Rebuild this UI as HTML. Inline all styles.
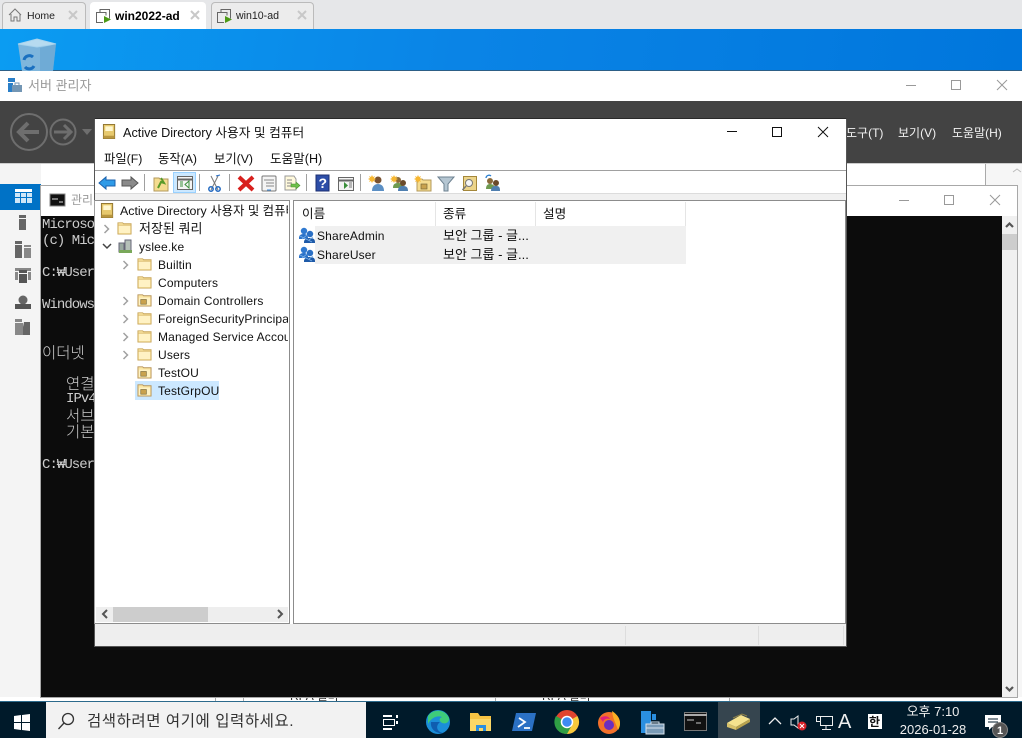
<!DOCTYPE html>
<html><head><meta charset="utf-8"><style>
html,body{margin:0;padding:0}
body{width:1022px;height:738px;position:relative;overflow:hidden;background:#fff;font:12px "Liberation Sans","Noto Sans CJK KR",sans-serif;color:#222}
.b{position:absolute;box-sizing:border-box}
.t{position:absolute;white-space:nowrap;line-height:16px;height:16px}
.l{letter-spacing:.16px}
.c{font:14px/16px "Liberation Mono","Noto Sans CJK KR",monospace;letter-spacing:-.96px;color:#ccc;position:absolute;white-space:pre}
.k{font:15.5px/16px "Noto Sans CJK KR",sans-serif;font-weight:300;color:#ccc;position:absolute;white-space:pre}
svg{position:absolute;left:0;top:0}
</style></head><body>
<!-- VM tabs -->
<div class="b" style="left:0;top:0;width:1022px;height:29px;background:#e6e7e9"></div>
<div class="b" style="left:2px;top:2px;width:84px;height:27px;background:#ececec;border:1px solid #bbb;border-bottom:0;border-radius:4px 4px 0 0"></div>
<div class="b" style="left:90px;top:2px;width:116px;height:27px;background:#fff;border-radius:4px 4px 0 0"></div>
<div class="b" style="left:211px;top:2px;width:103px;height:27px;background:#ececec;border:1px solid #bbb;border-bottom:0;border-radius:4px 4px 0 0"></div>
<div class="t" style="left:27px;top:8px;font-size:10.5px">Home</div>
<div class="t" style="left:115px;top:8px;font-size:12px;font-weight:bold;color:#000">win2022-ad</div>
<div class="t" style="left:236px;top:8px;font-size:10.6px">win10-ad</div>
<!-- desktop -->
<div class="b" style="left:0;top:29px;width:1022px;height:42px;background:linear-gradient(100deg,#0b9cf2,#0a84e6 45%,#0076dc)"></div>
<!-- server manager -->
<div class="b" style="left:0;top:70px;width:1022px;height:31px;background:#fff;border-top:1px solid #2d5f86"></div>
<div class="t" style="left:28px;top:78px;color:#999;font-size:13px">서버 관리자</div>
<div class="b" style="left:0;top:101px;width:1022px;height:62px;background:#434343"></div>
<div class="t" style="left:846px;top:125px;color:#f2f2f2">도구(T)</div>
<div class="t" style="left:898px;top:125px;color:#f2f2f2">보기(V)</div>
<div class="t" style="left:952px;top:125px;color:#f2f2f2">도움말(H)</div>
<div class="b" style="left:0;top:163px;width:1022px;height:534px;background:#fff;border-top:1px solid #ccc"></div>
<div class="b" style="left:0;top:164px;width:41px;height:533px;background:#f4f4f4"></div>
<div class="b" style="left:0;top:184px;width:41px;height:26px;background:#0072c6"></div>
<div class="b" style="left:985px;top:164px;width:1px;height:22px;background:#aaa"></div>
<div class="b" style="left:986px;top:164px;width:36px;height:534px;background:#f6f6f6"></div>
<!-- peeking table -->
<div class="b" style="left:0;top:697px;width:1022px;height:5px;background:#fff;overflow:hidden">
 <div class="b" style="left:215px;top:0;width:1px;height:5px;background:#aaa"></div>
 <div class="b" style="left:243px;top:0;width:1px;height:5px;background:#aaa"></div>
 <div class="b" style="left:495px;top:0;width:1px;height:5px;background:#aaa"></div>
 <div class="b" style="left:729px;top:0;width:1px;height:5px;background:#aaa"></div>
 <div class="t" style="left:290px;top:-9px;color:#333">RPA 설비</div>
 <div class="t" style="left:542px;top:-9px;color:#333">RPA 설비</div>
</div>
<!-- cmd -->
<div class="b" style="left:40px;top:185px;width:978px;height:513px;background:#fff;border:1px solid #a8a8a8"></div>
<div class="b" style="left:41px;top:216px;width:961px;height:481px;background:#0c0c0c;overflow:hidden">
<div class="c" style="left:1px;top:1px">Microsoft
(c) Microsoft

C:₩Users

Windows IP</div>
<div class="k" style="left:1px;top:128px">이더넷</div>
<div class="k" style="left:25px;top:159px">연결</div>
<div class="c" style="left:25px;top:175px">IPv4</div>
<div class="k" style="left:25px;top:191px">서브</div>
<div class="k" style="left:25px;top:207px">기본</div>
<div class="c" style="left:1px;top:241px">C:₩Users</div>
</div>
<div class="b" style="left:1002px;top:216px;width:15px;height:481px;background:#f0f0f0"></div>
<div class="b" style="left:1002px;top:234px;width:15px;height:16px;background:#cdcdcd"></div>
<div class="t" style="left:71px;top:192px;color:#999">관리</div>
<!-- ADUC -->
<div class="b" style="left:94px;top:118px;width:753px;height:529px;background:#fff;border:1px solid #555;border-top-color:#2a2a2a"></div>
<div class="t" style="left:123px;top:125px;color:#111;font-size:12.7px">Active Directory 사용자 및 컴퓨터</div>
<div class="t" style="left:104px;top:151px;color:#111;font-size:12.3px">파일(F)</div>
<div class="t" style="left:158px;top:151px;color:#111;font-size:12.3px">동작(A)</div>
<div class="t" style="left:214px;top:151px;color:#111;font-size:12.3px">보기(V)</div>
<div class="t" style="left:270px;top:151px;color:#111;font-size:12.6px">도움말(H)</div>
<div class="b" style="left:95px;top:170px;width:751px;height:1px;background:#a0a0a0"></div>
<div class="b" style="left:95px;top:193px;width:751px;height:7px;background:#f0f0f0;border-top:1px solid #dcdcdc"></div>
<div class="b" style="left:173px;top:172px;width:23px;height:21px;background:#cce8ff;border:1px solid #99d1ff"></div>
<div class="b" style="left:144px;top:174px;width:1px;height:17px;background:#a0a0a0"></div>
<div class="b" style="left:199px;top:174px;width:1px;height:17px;background:#a0a0a0"></div>
<div class="b" style="left:229px;top:174px;width:1px;height:17px;background:#a0a0a0"></div>
<div class="b" style="left:306px;top:174px;width:1px;height:17px;background:#a0a0a0"></div>
<div class="b" style="left:360px;top:174px;width:1px;height:17px;background:#a0a0a0"></div>
<!-- left pane -->
<div class="b" style="left:94px;top:200px;width:196px;height:424px;background:#fff;border:1px solid #8c8c8c;border-left-color:#a0a0a0;overflow:hidden">
 <div class="b" style="left:40px;top:180px;width:84px;height:19px;background:#cce8ff"></div>
 <div class="t" style="left:25px;top:2px;color:#111;font-size:12.4px">Active Directory 사용자 및 컴퓨터</div>
 <div class="t" style="left:44px;top:20px;color:#111;font-size:13px">저장된 쿼리</div>
 <div class="t l" style="left:44px;top:38px;color:#111">yslee.ke</div>
 <div class="t l" style="left:63px;top:56px;color:#111">Builtin</div>
 <div class="t l" style="left:63px;top:74px;color:#111">Computers</div>
 <div class="t l" style="left:63px;top:92px;color:#111">Domain Controllers</div>
 <div class="t l" style="left:63px;top:110px;color:#111">ForeignSecurityPrincipals</div>
 <div class="t l" style="left:63px;top:128px;color:#111">Managed Service Accounts</div>
 <div class="t l" style="left:63px;top:146px;color:#111">Users</div>
 <div class="t l" style="left:63px;top:164px;color:#111">TestOU</div>
 <div class="t l" style="left:63px;top:182px;color:#111">TestGrpOU</div>
 <div class="b" style="left:193px;top:0;width:1px;height:422px;background:#fff"></div>
 <div class="b" style="left:0;top:405px;width:194px;height:17px;background:#fff"></div>
 <div class="b" style="left:1px;top:406px;width:192px;height:15px;background:#eee"></div>
 <div class="b" style="left:18px;top:406px;width:95px;height:15px;background:#cdcdcd"></div>
</div>
<!-- right pane -->
<div class="b" style="left:293px;top:200px;width:553px;height:424px;background:#fff;border:1px solid #8c8c8c"></div>
<div class="b" style="left:435px;top:202px;width:1px;height:24px;background:#e5e5e5"></div>
<div class="b" style="left:535px;top:202px;width:1px;height:24px;background:#e5e5e5"></div>
<div class="b" style="left:685px;top:202px;width:1px;height:24px;background:#e5e5e5"></div>
<div class="b" style="left:315px;top:226px;width:371px;height:38px;background:#f0f0f0"></div>
<div class="t" style="left:302px;top:206px;color:#111;font-size:12.6px">이름</div>
<div class="t" style="left:443px;top:206px;color:#111;font-size:12.6px">종류</div>
<div class="t" style="left:543px;top:206px;color:#111;font-size:12.6px">설명</div>
<div class="t l" style="left:317px;top:228px;color:#111">ShareAdmin</div>
<div class="t l" style="left:317px;top:247px;color:#111">ShareUser</div>
<div class="t" style="left:443px;top:228px;color:#111;font-size:13px">보안 그룹 - 글...</div>
<div class="t" style="left:443px;top:247px;color:#111;font-size:13px">보안 그룹 - 글...</div>
<!-- status -->
<div class="b" style="left:95px;top:624px;width:751px;height:22px;background:#eee"></div>
<div class="b" style="left:625px;top:626px;width:1px;height:19px;background:#ddd"></div>
<div class="b" style="left:758px;top:626px;width:1px;height:19px;background:#ddd"></div>
<div class="b" style="left:843px;top:626px;width:1px;height:19px;background:#ddd"></div>
<!-- taskbar -->
<div class="b" style="left:0;top:701px;width:1022px;height:37px;background:#001a2a;border-top:1px solid #2c6a8c"></div>
<div class="b" style="left:46px;top:702px;width:320px;height:36px;background:#f2f2f2"></div>
<div class="t" style="left:87px;top:714px;font-size:15.5px;letter-spacing:.55px;color:#333">검색하려면 여기에 입력하세요.</div>
<div class="b" style="left:718px;top:702px;width:42px;height:36px;background:#36454f"></div>
<div class="t" style="left:903px;top:704px;color:#eee;width:60px;text-align:center;font-size:13px">오후 7:10</div>
<div class="t" style="left:893px;top:722px;color:#eee;width:80px;text-align:center;font-size:13px">2026-01-28</div>
<div class="t" style="left:838px;top:712px;color:#eee;font-size:20px;line-height:20px;height:20px">A</div>

<svg width="1022" height="738" viewBox="0 0 1022 738" fill="none">
<defs>
 <symbol id="fold" viewBox="0 0 16 16" overflow="visible"><path d="M1 3h5l1 1h8v11H1z" fill="#fbe6a2" stroke="#c9a65a"/><path d="M2 6h12v8H2z" fill="#fff2c4"/><path d="M1.500 5.500h13" stroke="#d9b96f"/></symbol>
 <symbol id="ou" viewBox="0 0 16 16" overflow="visible"><path d="M1 3h5l1 1h8v11H1z" fill="#fbe6a2" stroke="#b8955a"/><path d="M2 6h12v8H2z" fill="#fff2c4"/><rect x="4" y="8" width="6" height="5" fill="#c9a24e" stroke="#7a6a3a" stroke-width=".7"/></symbol>
 <symbol id="grp" viewBox="0 0 16 16" overflow="visible"><circle cx="5" cy="4" r="3.200" fill="#2f79d0"/><circle cx="11" cy="7" r="3.200" fill="#2a6fc4"/><path d="M0 11c0-3 2-4 5-4s4 2 4 4v1H0z" fill="#2b72c8"/><path d="M5 15c0-3 3-4 6-4s5 1 5 4v1H5z" fill="#1e5aa8"/><path d="M1 9l12 6M3 12l5-4M10 13l4-3" stroke="#7bb2ea" stroke-width=".8"/></symbol>
 <symbol id="book" viewBox="0 0 16 16" overflow="visible"><rect x="1.500" y=".5" width="12" height="15" fill="#e7c96d" stroke="#8f7430"/><rect x="3.500" y="2.500" width="8" height="5" fill="#fff7cf"/><rect x="1.500" y="12.500" width="12" height="3" fill="#b8963f"/></symbol>
 <symbol id="chev" viewBox="0 0 8 10" overflow="visible"><path d="M1.500 1l4 4-4 4" stroke="#a0a0a0" stroke-width="1.500"/></symbol>
</defs>
<!-- tab icons -->
<path d="M9 15l6-6 6 6M11 14v7h3v-4h3v4h3v-7" stroke="#777" stroke-width="1"/>
<path d="M69 11l8 8M77 11l-8 8M191 11l8 8M199 11l-8 8M298 11l8 8M306 11l-8 8" stroke="#c8c8c8" stroke-width="2"/>
<g stroke="#666"><path d="M100 12V9.500h9.500v9"/><path d="M103 22.500h-6.500v-10h9.500v3"/></g><path d="M104 16l7 3.500-7 3.500z" fill="#4c9a16"/>
<g stroke="#666"><path d="M221 12V9.500h9.500v9"/><path d="M224 22.500h-6.500v-10h9.500v3"/></g><path d="M225 16l7 3.500-7 3.500z" fill="#4c9a16"/>
<!-- recycle bin -->
<path d="M18 44l19-5 19 5-3 27H22z" fill="#7fb6dc"/><path d="M18 44l19-5 19 5-19 3z" fill="#b7dbf0" stroke="#a8d4ee"/><path d="M40 48v23h13l3-27z" fill="#5f9fcf" fill-opacity=".5"/>
<path d="M24 60a5.500 5.500 0 0 1 9-3M34 66a5.500 5.500 0 0 1-9 1" stroke="#1a70c0" stroke-width="3"/>
<!-- server manager -->
<path d="M8 78h7v4H8z" fill="#2a7fc8"/><path d="M8 83h5v9H8z" fill="#2a7fc8"/><rect x="12" y="85" width="10" height="7" fill="#7396b4"/><path d="M15 85v-2h4v2" stroke="#7396b4"/>
<path d="M906 85.500h10" stroke="#999"/><rect x="951.500" y="80.500" width="9" height="9" stroke="#999"/><path d="M997 80l10 10M1007 80l-10 10" stroke="#999"/>
<circle cx="29" cy="132" r="18" stroke="#6e6e6e" stroke-width="2"/><circle cx="63" cy="132" r="12.500" stroke="#6e6e6e" stroke-width="2"/>
<path d="M39 132H20M28 123l-9 9 9 9" stroke="#6e6e6e" stroke-width="4"/><path d="M54 132h16M64 125l7 7-7 7" stroke="#6e6e6e" stroke-width="3"/>
<path d="M82 129h10l-5 6z" fill="#6e6e6e"/>
<!-- nav icons -->
<path d="M15 189h17v3H15z" fill="#fff"/><path d="M15 193h5v4h-5zM21 193h5v4h-5zM27 193h5v4h-5zM15 198h5v5h-5zM21 198h5v5h-5zM27 198h5v5h-5z" fill="#cfe6f7"/>
<path d="M19 215h7v3h-7zM19 219h7v11h-7z" fill="#666"/>
<path d="M15 241h7v3h-7zM15 245h7v13h-7z" fill="#666"/><path d="M24 245h7v2h-7zM24 248h7v10h-7z" fill="#888"/>
<path d="M15 268h16v3H15zM15 272h3v8h-3zM28 272h3v8h-3z" fill="#888"/><path d="M19 270h8v3h-8zM19 274h8v9h-8z" fill="#555"/>
<circle cx="23" cy="300" r="4.500" fill="#666"/><path d="M15 304h16v5H15z" fill="#555"/>
<path d="M15 319h7v3h-7zM15 323h8v12h-8z" fill="#888"/><path d="M24 322h6v13h-7v-8z" fill="#666"/>
<!-- cmd icons -->
<rect x="50" y="194" width="15" height="12" fill="#111" stroke="#888"/><path d="M52 199h6M59 202h4" stroke="#ddd"/>
<path d="M899 200.500h10" stroke="#999"/><rect x="944.500" y="195.500" width="9" height="9" stroke="#999"/><path d="M990 195l10 10M1000 195l-10 10" stroke="#999"/>
<path d="M1006 227l3.500-3.500 3.500 3.500" stroke="#555" stroke-width="2.200"/>
<path d="M1006 687l3.500 3.500 3.500-3.500" stroke="#555" stroke-width="2.200"/>
<path d="M1013 172l4-3 4 3" stroke="#bbb"/>
<!-- ADUC title -->
<use href="#book" x="102" y="124" width="15" height="15"/>
<path d="M727 131.500h10" stroke="#111"/><rect x="772.500" y="127.500" width="9" height="9" stroke="#111"/><path d="M818 127l10 10M828 127l-10 10" stroke="#111"/>
<!-- toolbar -->
<path d="M99 183l7-6v3h9v6h-9v3z" fill="#2f9be8" stroke="#1b62ad"/>
<path d="M138 183l-7-6v3h-9v6h9v3z" fill="#8a8a8a" stroke="#555"/>
<path d="M154 178h5l1 1h8v12h-14z" fill="#f5dc90" stroke="#b39a5c"/><path d="M158 188l3-6 3 1-3-5" stroke="#5a9a2a" stroke-width="2"/>
<rect x="177.500" y="176.500" width="15" height="13" fill="#f4f4f4" stroke="#666"/><path d="M178 179.500h14" stroke="#666" stroke-width="2"/><path d="M180 182h3M180 184h3M180 186h3M189 181v7l-4-3.500z" stroke="#3a8f3a"/>
<path d="M211 190l7-14M218 190l-7-14" stroke="#777"/><circle cx="211" cy="189" r="2.200" stroke="#2269c0" stroke-width="1.500"/><circle cx="218" cy="189" r="2.200" stroke="#2269c0" stroke-width="1.500"/><path d="M216 176l4-1" stroke="#2269c0"/>
<path d="M239 177l14 13M253 177l-14 13" stroke="#d8211e" stroke-width="4"/>
<rect x="262" y="176" width="14" height="15" rx="1" fill="#f4f4f4" stroke="#777"/><path d="M264 180h10M266 183h8M266 186h8" stroke="#888"/><path d="M267 190h4" stroke="#3b8de0"/>
<path d="M285 176h9l2 3v11h-11z" fill="#fff9dc" stroke="#999"/><path d="M287 180h5M287 183h5M287 186h4" stroke="#888"/><path d="M291 184h5v-2l4 3.500-4 3.500v-2h-5z" fill="#6ec04a" stroke="#4b8f2e" stroke-width=".6"/>
<rect x="316" y="175" width="13" height="16" fill="#2d4ea8" stroke="#1c2f70"/><text x="318.500" y="188" font-family="Liberation Sans" font-weight="bold" font-size="14" fill="#fff">?</text>
<rect x="338.500" y="177.500" width="15" height="13" fill="#f4f4f4" stroke="#666"/><path d="M339 180.500h14" stroke="#666" stroke-width="2"/><path d="M344 182v7l4-3.500z" fill="#3a8f3a"/><path d="M349 183h3M349 185h3M349 187h3" stroke="#777"/>
<circle cx="378" cy="180" r="3.500" fill="#7a5230"/><path d="M372 191c0-5 3-7 6-7s6 2 6 7z" fill="#5b8fc4"/><path d="M372 175l1 2 2-1-1 2 2 1-2 1 1 2-2-1-1 2-1-2-2 1 1-2-2-1 2-1-1-2 2 1z" fill="#f7b731"/>
<circle cx="398" cy="180" r="3" fill="#8a6a3a"/><path d="M393 188c0-4 2-5 5-5s5 1 5 5z" fill="#6f9a50"/><circle cx="403" cy="183" r="3" fill="#6a4a2a"/><path d="M398 191c0-4 2-5 5-5s5 1 5 5z" fill="#4f7fb0"/><path d="M394 175l1 2 2-1-1 2 2 1-2 1 1 2-2-1-1 2-1-2-2 1 1-2-2-1 2-1-1-2 2 1z" fill="#f7b731"/>
<path d="M417 179h5l1 1h8v11h-14z" fill="#f5dc90" stroke="#b39a5c"/><rect x="421" y="184" width="6" height="5" fill="#c9a24e" stroke="#7a6a3a" stroke-width=".7"/><path d="M418 175l1 2 2-1-1 2 2 1-2 1 1 2-2-1-1 2-1-2-2 1 1-2-2-1 2-1-1-2 2 1z" fill="#f7b731"/>
<path d="M438 177h16l-6 7v7h-4v-7z" fill="#b5c6d2" stroke="#6d8190"/>
<rect x="463.500" y="176.500" width="13" height="14" fill="#ecd48a" stroke="#a4873a"/><circle cx="469" cy="183" r="3.500" fill="#f6f6f6" stroke="#777"/><path d="M466 186l-3.500 4" stroke="#777" stroke-width="1.500"/>
<circle cx="490" cy="181" r="3" fill="#8a6a3a"/><path d="M486 189c0-4 2-5 4-5s5 1 5 5z" fill="#6f9a50"/><circle cx="496" cy="183" r="3" fill="#6a4a2a"/><path d="M491 191c0-4 2-5 5-5s4 1 4 5z" fill="#4f7fb0"/><path d="M486 178a3 3 0 0 1 5-2" stroke="#2a7fd0" stroke-width="1.300"/>
<!-- tree -->
<use href="#book" x="100" y="203" width="15" height="15"/>
<use href="#chev" x="103" y="224" width="8" height="10"/>
<use href="#fold" x="117" y="220" width="15" height="15"/>
<path d="M103 244l4 4 4-4" stroke="#444" stroke-width="1.500"/>
<rect x="119" y="243" width="5" height="9" fill="#9aa8a0" stroke="#667"/><rect x="125" y="240" width="6" height="12" fill="#b5c0b8" stroke="#667"/><path d="M119 250h13v3h-13z" fill="#79a85a"/>
<use href="#chev" x="122" y="260" width="8" height="10"/>
<use href="#fold" x="137" y="256" width="15" height="15"/>
<use href="#fold" x="137" y="274" width="15" height="15"/>
<use href="#chev" x="122" y="296" width="8" height="10"/>
<use href="#ou" x="137" y="292" width="15" height="15"/>
<use href="#chev" x="122" y="314" width="8" height="10"/>
<use href="#fold" x="137" y="310" width="15" height="15"/>
<use href="#chev" x="122" y="332" width="8" height="10"/>
<use href="#fold" x="137" y="328" width="15" height="15"/>
<use href="#chev" x="122" y="350" width="8" height="10"/>
<use href="#fold" x="137" y="346" width="15" height="15"/>
<use href="#ou" x="137" y="364" width="15" height="15"/>
<use href="#ou" x="137" y="382" width="15" height="15"/>
<path d="M107 610l-4 4 4 4M278 610l4 4-4 4" stroke="#555" stroke-width="2"/>
<use href="#grp" x="299" y="227" width="16" height="16"/>
<use href="#grp" x="299" y="246" width="16" height="16"/>
<!-- taskbar icons -->
<path d="M14 716l7-1v7h-7zM22 715l8-1v8h-8zM14 723h7v7l-7-1zM22 723h8v8l-8-1z" fill="#fff"/>
<circle cx="68" cy="719" r="5.500" stroke="#333" stroke-width="1.300"/><path d="M64 723l-5.500 6" stroke="#333" stroke-width="1.300"/>
<path d="M383 715h9v2h-9zM383 728h9v2h-9z" fill="#fff"/><rect x="383.500" y="719.500" width="11" height="6" stroke="#fff"/><path d="M396 715h2v3h-2zM396 721h2v3h-2z" fill="#fff"/>
<circle cx="438" cy="722" r="12" fill="#1b8ed8"/><path d="M428 716a12 12 0 0 1 21 2c1 6-7 7-9 3-1-2 0-3 2-4-5-2-11 1-14 7z" fill="#3ecb7a"/><path d="M431 722c-1 7 5 12 12 11-6-1-8-7-3-11z" fill="#0f5db0"/>
<path d="M470 713h8l2 3h11v15h-21z" fill="#f6c343"/><path d="M470 719h21v12h-21z" fill="#fbd766"/><path d="M476 725h10v6h-3v-3h-4v3h-3z" fill="#2a8fe0"/>
<path d="M516 713h20l-4 18h-20z" fill="#2b71c4"/><path d="M519 718l6 4-7 5M524 728h6" stroke="#fff" stroke-width="1.800"/>
<circle cx="567" cy="722" r="12" fill="#e0442f"/><path d="M567 722l10.400-6A12 12 0 0 1 567 734z" fill="#f7c93c"/><path d="M556 716a12 12 0 0 0 11 18l5-9z" fill="#2f9e44"/><circle cx="567" cy="722" r="5.500" fill="#3d8bf2" stroke="#fff" stroke-width="1.500"/>
<circle cx="609" cy="723" r="11" fill="#f2702a"/><path d="M612 711c8 5 10 13 6 19-2-7-5-10-6-19z" fill="#fbb024"/><circle cx="609" cy="725" r="5" fill="#6a2fc0"/><path d="M600 718c4-3 9-2 10 1-3-1-6 0-7 3z" fill="#e0207a"/>
<path d="M641 711h10v22h-10z" fill="#2a8fe0"/><path d="M652 714h4v6h-4z" fill="#2a8fe0"/><rect x="646" y="724" width="18" height="10" fill="#7a9bb6" stroke="#d6e2ec"/><path d="M651 724v-2h8v2M646 728h18" stroke="#d6e2ec"/>
<rect x="684.500" y="712.500" width="22" height="18" fill="#111" stroke="#777"/><path d="M684 715h23" stroke="#aaa" stroke-width="2"/><path d="M687 720h7M696 723h5" stroke="#ccc"/>
<path d="M727 723l14-8 9 4-14 8z" fill="#f5e28e"/><path d="M727 723l9 4v3l-9-3z" fill="#d9c26a"/><path d="M736 727l14-8v3l-14 8z" fill="#b8a24e"/><path d="M733 718l9-4 5 2" stroke="#8f8248"/>
<path d="M769 724l6-6 6 6" stroke="#eee" stroke-width="1.300"/>
<path d="M791 719h3l4-3v12l-4-3h-3z" stroke="#eee"/><circle cx="802" cy="726" r="4.500" fill="#d8232a"/><path d="M800 724l4 4M804 724l-4 4" stroke="#fff"/>
<rect x="818.500" y="716.500" width="12" height="9" stroke="#eee" transform="translate(2 0)"/><rect x="816.500" y="716.500" width="4" height="5" fill="#001a2a" stroke="#eee"/><path d="M826 726v3M822 729.500h9" stroke="#eee"/>
<rect x="868" y="714" width="14" height="15" fill="#fff"/><text x="869" y="726" font-family="Noto Sans CJK KR" font-size="12" font-weight="bold" fill="#111">한</text>
<path d="M985 715h16v12h-9l-3 3v-3h-4z" fill="#fff"/><path d="M988 719h10M988 722h10" stroke="#001a2a"/><circle cx="1000" cy="730" r="7.500" fill="#555" stroke="#888"/><text x="997" y="734" font-family="Liberation Sans" font-size="11" font-weight="bold" fill="#fff">1</text>
</svg>
</body></html>
